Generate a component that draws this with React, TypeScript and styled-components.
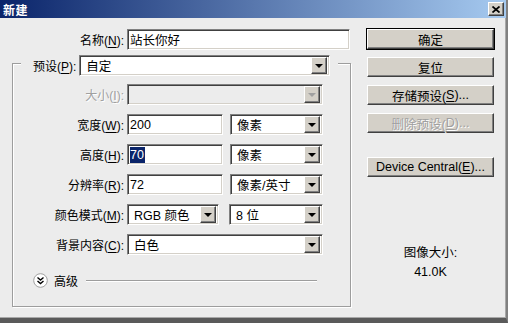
import React from 'react';
import styled, { createGlobalStyle } from 'styled-components';

const GlobalStyle = createGlobalStyle`
    html, body {
        margin: 0;
        padding: 0;
        background: #ececec;
    }

    body {
        font-family: 'Liberation Sans', 'Noto Sans CJK SC', sans-serif;
        font-size: 12px;
        color: #000;
    }
`;

const Window = styled.div`
    width: 508px;
    height: 323px;
    box-sizing: border-box;
    display: flex;
    flex-direction: column;
    background: #ececec;
    border-right: 2px solid #808080;
    border-bottom: 5px solid #5a5a5a;
    box-shadow: inset -1px -1px 0 #a8a8a8;
    overflow: hidden;
`;

const TitleBar = styled.div`
    height: 18px;
    flex: none;
    display: flex;
    align-items: center;
    justify-content: space-between;
    padding: 0 2px 0 3px;
    background: linear-gradient(to right, #0a246a, #a6caf0);
`;

const Title = styled.span`
    color: #fff;
    font-weight: bold;
    font-size: 12px;
    letter-spacing: 0.5px;
`;

const raised = `
    background: #d4d0c8;
    border-top: 1px solid #fff;
    border-left: 1px solid #fff;
    border-right: 1px solid #404040;
    border-bottom: 1px solid #404040;
    box-shadow: inset -1px -1px 0 #808080;
    box-sizing: border-box;
`;

const CloseButton = styled.div`
    ${raised}
    width: 16px;
    height: 14px;
    display: flex;
    align-items: center;
    justify-content: center;
`;

const Body = styled.div`
    flex: 1;
    display: flex;
    gap: 16px;
    padding: 11px 0 0 12px;
`;

const LeftColumn = styled.div`
    width: 339px;
    display: flex;
    flex-direction: column;
`;

const NameRow = styled.div`
    display: flex;
    align-items: center;
    gap: 3px;
`;

const Label = styled.label<{ $width?: number; $disabled?: boolean }>`
    width: ${(p) => (p.$width ? `${p.$width}px` : 'auto')};
    text-align: right;
    white-space: nowrap;
    color: ${(p) => (p.$disabled ? '#a0a0a0' : '#000')};
    text-shadow: ${(p) => (p.$disabled ? '1px 1px 0 #fff' : 'none')};

    u {
        text-decoration: underline;
        text-underline-offset: 2px;
    }
`;

const sunken = `
    box-sizing: border-box;
    height: 21px;
    border-top: 1px solid #808080;
    border-left: 1px solid #808080;
    border-right: 1px solid #fff;
    border-bottom: 1px solid #fff;
    box-shadow: inset 1px 1px 0 #404040, inset -1px -1px 0 #d4d0c8;
`;

const TextBox = styled.div<{ $width: number }>`
    ${sunken}
    width: ${(p) => p.$width}px;
    background: #fff;
    display: flex;
    align-items: center;
    padding-left: 2px;
    font-size: 12.5px;
`;

const Selected = styled.span`
    background: #0a246a;
    color: #fff;
    line-height: 16px;
    padding: 0 1px 0 0;
`;

const SelectBox = styled.div<{ $width: number; $disabled?: boolean }>`
    ${sunken}
    width: ${(p) => p.$width}px;
    background: ${(p) => (p.$disabled ? '#ececec' : '#fff')};
    display: flex;
    align-items: center;
    justify-content: space-between;
    padding: 2px 2px 2px 6px;
    font-size: 12.5px;
`;

const DropButton = styled.div`
    ${raised}
    width: 16px;
    height: 17px;
    display: flex;
    align-items: center;
    justify-content: center;
`;

const Arrow = styled.span<{ $disabled?: boolean }>`
    width: 0;
    height: 0;
    border-left: 4px solid transparent;
    border-right: 4px solid transparent;
    border-top: 4px solid ${(p) => (p.$disabled ? '#a0a0a0' : '#000')};
`;

const Group = styled.div`
    margin-top: 13px;
    height: 244px;
    box-sizing: border-box;
    border: 1px solid #9d9d9d;
    box-shadow: inset 1px 1px 0 #fff, 1px 1px 0 #fff;
    display: flex;
    flex-direction: column;
`;

const GroupHead = styled.div`
    align-self: flex-start;
    margin: -9px 0 0 8px;
    padding: 0 8px 0 12px;
    background: #ececec;
    display: flex;
    align-items: center;
    gap: 3px;
`;

const FieldGrid = styled.div`
    margin-top: 8px;
    display: grid;
    grid-template-columns: 111px 196px;
    grid-auto-rows: 21px;
    column-gap: 3px;
    row-gap: 9px;
    align-items: center;

    ${Label} {
        text-align: right;
    }
`;

const FieldPair = styled.div`
    display: flex;
    justify-content: space-between;
    align-items: center;
`;

const AdvancedRow = styled.div`
    margin: 18px 33px 0 20px;
    height: 15px;
    display: flex;
    align-items: center;
    gap: 6px;
`;

const Rule = styled.div`
    flex: 1;
    height: 1px;
    background: #9d9d9d;
    border-bottom: 1px solid #fff;
    margin-left: 2px;
`;

const RightColumn = styled.div`
    width: 127px;
    display: flex;
    flex-direction: column;
    gap: 8px;
`;

const Button = styled.div<{ $default?: boolean; $disabled?: boolean; $gapTop?: number }>`
    ${raised}
    height: 20px;
    display: flex;
    align-items: center;
    justify-content: center;
    margin-top: ${(p) => p.$gapTop ?? 0}px;
    color: ${(p) => (p.$disabled ? '#a0a0a0' : '#000')};
    text-shadow: ${(p) => (p.$disabled ? '1px 1px 0 #fff' : 'none')};
    outline: ${(p) => (p.$default ? '1px solid #000' : 'none')};
    font-size: 12.5px;

    u {
        text-underline-offset: 2px;
    }
`;

const SizeInfo = styled.div`
    margin-top: 61px;
    display: flex;
    flex-direction: column;
    align-items: center;
    gap: 4px;
    line-height: 15px;
    font-size: 12.5px;
`;

const Select = ({
    width,
    value,
    disabled,
}: {
    width: number;
    value?: string;
    disabled?: boolean;
}) => (
    <SelectBox $width={width} $disabled={disabled}>
        <span>{value}</span>
        <DropButton>
            <Arrow $disabled={disabled} />
        </DropButton>
    </SelectBox>
);

const AdvancedIcon = () => (
    <svg width="15" height="15" viewBox="0 0 15 15">
        <circle cx="7.5" cy="7.5" r="6.8" fill="#fff" stroke="#a0a0a0" />
        <path d="M4.5 4.5 L7.5 7 L10.5 4.5 M4.5 8 L7.5 10.5 L10.5 8" fill="none" stroke="#000" strokeWidth="1.4" />
    </svg>
);

export default function App() {
    return (
        <>
            <GlobalStyle />
            <Window>
                <TitleBar>
                    <Title>新建</Title>
                    <CloseButton>
                        <svg width="8" height="7" viewBox="0 0 8 7">
                            <path d="M0.5 0.5 L7.5 6.5 M7.5 0.5 L0.5 6.5" stroke="#000" strokeWidth="1.7" />
                        </svg>
                    </CloseButton>
                </TitleBar>
                <Body>
                    <LeftColumn>
                        <NameRow>
                            <Label $width={112}>
                                名称(<u>N</u>):
                            </Label>
                            <TextBox $width={223}>站长你好</TextBox>
                        </NameRow>
                        <Group>
                            <GroupHead>
                                <Label>
                                    预设(<u>P</u>):
                                </Label>
                                <Select width={251} value="自定" />
                            </GroupHead>
                            <FieldGrid>
                                <Label $disabled>
                                    大小(<u>I</u>):
                                </Label>
                                <Select width={196} disabled />

                                <Label>
                                    宽度(<u>W</u>):
                                </Label>
                                <FieldPair>
                                    <TextBox $width={96}>200</TextBox>
                                    <Select width={93} value="像素" />
                                </FieldPair>

                                <Label>
                                    高度(<u>H</u>):
                                </Label>
                                <FieldPair>
                                    <TextBox $width={96}>
                                        <Selected>70</Selected>
                                    </TextBox>
                                    <Select width={93} value="像素" />
                                </FieldPair>

                                <Label>
                                    分辨率(<u>R</u>):
                                </Label>
                                <FieldPair>
                                    <TextBox $width={96}>72</TextBox>
                                    <Select width={93} value="像素/英寸" />
                                </FieldPair>

                                <Label>
                                    颜色模式(<u>M</u>):
                                </Label>
                                <FieldPair>
                                    <Select width={92} value="RGB 颜色" />
                                    <Select width={94} value="8 位" />
                                </FieldPair>

                                <Label>
                                    背景内容(<u>C</u>):
                                </Label>
                                <Select width={196} value="白色" />
                            </FieldGrid>
                            <AdvancedRow>
                                <AdvancedIcon />
                                <span>高级</span>
                                <Rule />
                            </AdvancedRow>
                        </Group>
                    </LeftColumn>
                    <RightColumn>
                        <Button $default>确定</Button>
                        <Button>复位</Button>
                        <Button>
                            存储预设(<u>S</u>)...
                        </Button>
                        <Button $disabled>
                            删除预设(<u>D</u>)...
                        </Button>
                        <Button $gapTop={16}>
                            Device Central(<u>E</u>)...
                        </Button>
                        <SizeInfo>
                            <span>图像大小:</span>
                            <span>41.0K</span>
                        </SizeInfo>
                    </RightColumn>
                </Body>
            </Window>
        </>
    );
}
